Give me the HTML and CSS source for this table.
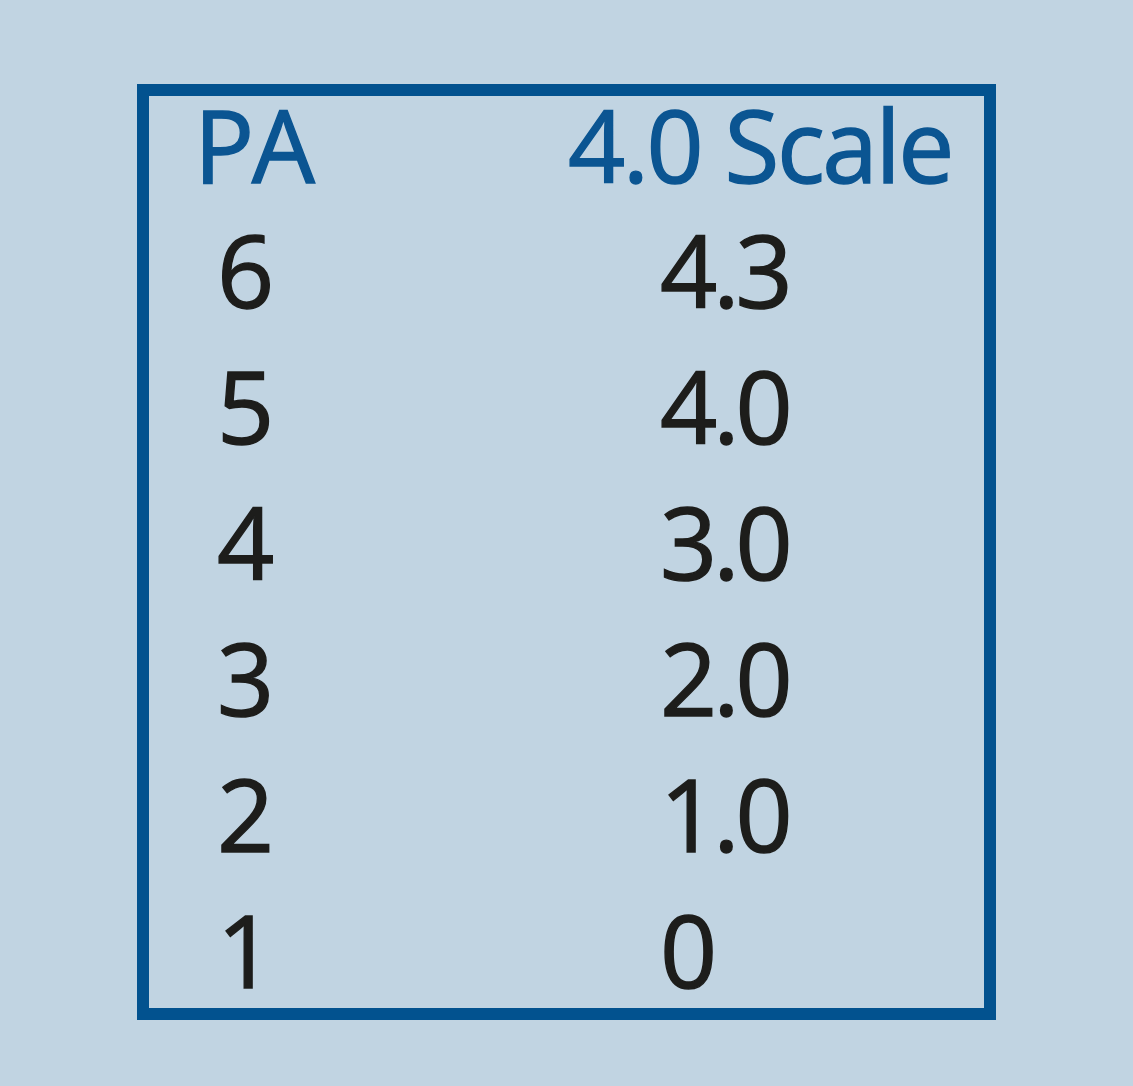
FILE: index.html
```html
<!DOCTYPE html>
<html lang="en">
<head>
<meta charset="utf-8">
<title>PA to 4.0 Scale</title>
<link rel="stylesheet" href="styles.css">
</head>
<body>
<main class="card">
  <div class="scale-table">
    <div class="head head-pa">PA</div>
    <div class="head head-gpa">4.0 Scale</div>
    <div class="cell pa">6</div><div class="cell gpa">4.3</div>
    <div class="cell pa">5</div><div class="cell gpa">4.0</div>
    <div class="cell pa">4</div><div class="cell gpa">3.0</div>
    <div class="cell pa">3</div><div class="cell gpa">2.0</div>
    <div class="cell pa">2</div><div class="cell gpa">1.0</div>
    <div class="cell pa">1</div><div class="cell gpa">0</div>
  </div>
</main>
</body>
</html>
```

FILE: styles.css
```css
html, body {
  margin: 0;
  padding: 0;
}

body {
  background: #c1d4e2;
  width: 1133px;
  height: 1086px;
  overflow: hidden;
  font-family: "Open Sans", "Noto Sans", sans-serif;
}

.card {
  box-sizing: border-box;
  margin: 84px 0 0 137px;
  width: 859px;
  height: 936px;
  border: 12px solid #02528f;
  padding: 3px 0 0 45px;
}

.scale-table {
  display: grid;
  grid-template-columns: 374px 1fr;
  font-size: 100px;
  font-weight: 400;
  -webkit-text-stroke: 1.4px currentColor;
}

.head {
  color: #0b5592;
  line-height: 90px;
  margin-bottom: 12px;
  letter-spacing: -2.5px;
}

.cell {
  color: #1d1d1b;
  line-height: 136px;
}

.pa {
  padding-left: 23px;
}

.gpa {
  padding-left: 92px;
  letter-spacing: -4px;
}
```
